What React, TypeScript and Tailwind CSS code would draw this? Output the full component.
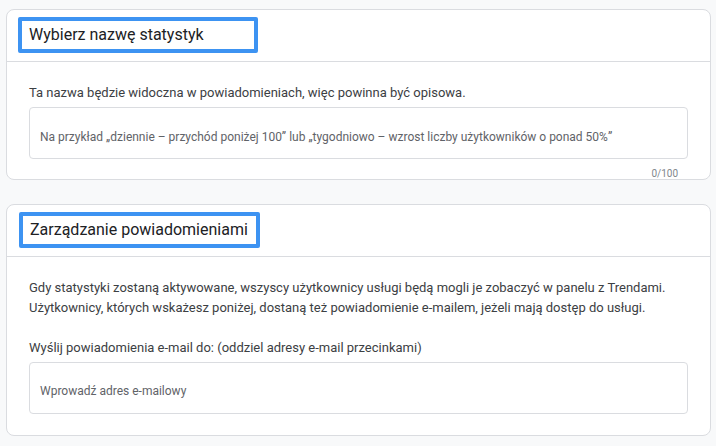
export default function App() {
  return (
    <div className="w-[716px] h-[446px] bg-[#f8f9fa] px-[6px] pt-[9px] font-['Roboto',sans-serif] text-[#3c4043] flex flex-col gap-[24px]">
      <section className="w-[705px] bg-white border border-[#dadce0] rounded-lg">
        <div className="px-[11px] pt-[7px] pb-[8px] border-b border-[#dadce0]">
          <div className="w-[240px] h-[36px] border-[4px] border-[#3d93f2] rounded-[2px] flex items-center pl-[7px]">
            <h2 className="text-[16px] text-[#202124] whitespace-nowrap">Wybierz nazwę statystyk</h2>
          </div>
        </div>
        <div className="px-[22px] pt-[21px]">
          <p className="text-[13px] leading-[20px]">Ta nazwa będzie widoczna w powiadomieniach, więc powinna być opisowa.</p>
          <div className="mt-[4px] h-[52px] border border-[#dadce0] rounded-[4px] px-[10px] pt-[19px]">
            <span className="text-[12px] leading-[20px] text-[#5f6368] block">
              Na przykład „dziennie – przychód poniżej 100” lub „tygodniowo – wzrost liczby użytkowników o ponad 50%”
            </span>
          </div>
          <div className="mt-[10px] h-[10px] leading-[10px] text-[10px] text-[#80868b] text-right pr-[10px]">0/100</div>
        </div>
      </section>

      <section className="w-[705px] bg-white border border-[#dadce0] rounded-lg pb-[21px]">
        <div className="px-[12px] pt-[7px] pb-[8px] border-b border-[#dadce0]">
          <div className="w-[241px] h-[36px] border-[4px] border-[#3d93f2] rounded-[2px] flex items-center pl-[7px]">
            <h2 className="text-[16px] text-[#202124] whitespace-nowrap">Zarządzanie powiadomieniami</h2>
          </div>
        </div>
        <div className="px-[22px] pt-[21px]">
          <p className="text-[13px] leading-[20px]">
            Gdy statystyki zostaną aktywowane, wszyscy użytkownicy usługi będą mogli je zobaczyć w panelu z Trendami.
            <br />
            Użytkownicy, których wskażesz poniżej, dostaną też powiadomienie e-mailem, jeżeli mają dostęp do usługi.
          </p>
          <label className="block mt-[20px] text-[13px] leading-[20px]">
            Wyślij powiadomienia e-mail do: (oddziel adresy e-mail przecinkami)
          </label>
          <div className="mt-[4px] h-[52px] border border-[#dadce0] rounded-[4px] px-[10px] pt-[18px]">
            <span className="text-[12px] leading-[20px] text-[#5f6368] block">Wprowadź adres e-mailowy</span>
          </div>
        </div>
      </section>
    </div>
  );
}
